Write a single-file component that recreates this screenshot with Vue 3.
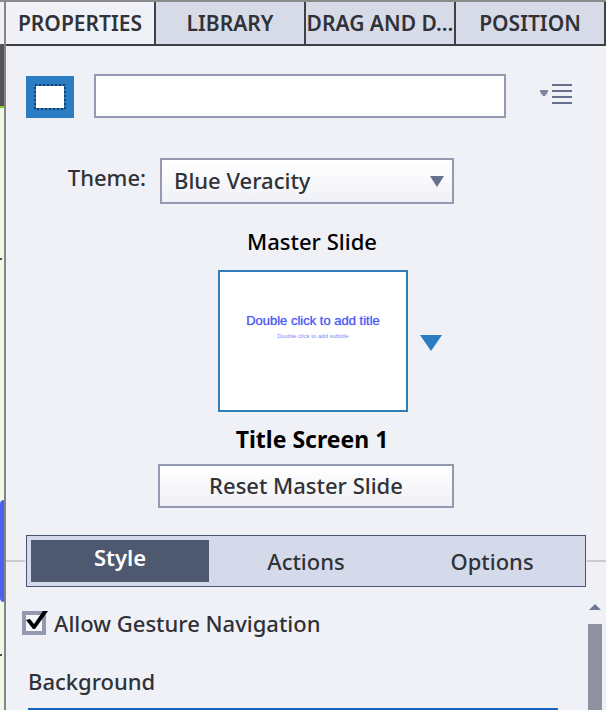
<template>
  <div class="workspace">
    <div class="canvas-edge">
      <div class="edge-top"></div>
      <div class="edge-ruler"></div>
      <div class="edge-slide">
        <i class="edge-dot dot-upper"></i>
        <i class="edge-shape"></i>
        <i class="edge-dot dot-lower"></i>
      </div>
    </div>

    <main class="panel">
      <nav class="panel-tabs">
        <button
          v-for="tab in panelTabs"
          :key="tab"
          type="button"
          :class="{ active: tab === activePanel }"
          @click="activePanel = tab"
        >
          {{ tab }}
        </button>
      </nav>

      <div class="name-row">
        <svg class="slide-icon" width="48" height="42" viewBox="0 0 48 42">
          <rect width="48" height="42" fill="#2a7dc2" />
          <rect x="9" y="9" width="30" height="24" fill="#fff" />
          <rect x="9" y="9" width="30" height="24" fill="none" stroke="#2a7dc2" stroke-width="2" />
          <rect
            x="9"
            y="9"
            width="30"
            height="24"
            fill="none"
            stroke="#103f6b"
            stroke-width="2"
            stroke-dasharray="2 2"
          />
        </svg>
        <input v-model="slideName" type="text" aria-label="Slide name" />
        <button class="menu-button" type="button" aria-label="Panel menu">
          <svg width="34" height="22" viewBox="0 0 34 22">
            <path d="M0 7h8v2L5 13H3L0 9z" fill="#7d86a0" />
            <path d="M12 2h20M12 8h20M12 14h20M12 20h20" stroke="#66708d" stroke-width="2" />
          </svg>
        </button>
      </div>

      <div class="theme-row">
        <label for="theme">Theme:</label>
        <div class="select-box">
          <select id="theme" v-model="theme">
            <option>Blue Veracity</option>
          </select>
          <svg class="select-arrow" width="14" height="12" viewBox="0 0 14 12">
            <path d="M0 1h14L7 12z" fill="#66708f" />
          </svg>
        </div>
      </div>

      <section class="master">
        <h2>Master Slide</h2>
        <div class="master-row">
          <div class="thumbnail">
            <p class="thumb-title">Double click to add title</p>
            <p class="thumb-subtitle">Double click to add subtitle</p>
          </div>
          <button class="master-arrow" type="button" aria-label="Choose master slide">
            <svg width="22" height="16" viewBox="0 0 22 16">
              <path d="M0 0h22L11 16z" fill="#2a7dc2" />
            </svg>
          </button>
        </div>
        <h3>Title Screen 1</h3>
      </section>
      <button class="reset-button" type="button">Reset Master Slide</button>

      <div class="section-row">
        <nav class="section-tabs">
          <button
            v-for="section in sections"
            :key="section"
            type="button"
            :class="{ active: section === activeSection }"
            @click="activeSection = section"
          >
            {{ section }}
          </button>
        </nav>
      </div>

      <div class="scroll-area">
        <div class="settings">
          <label class="check-row">
            <span class="check-box">
              <input v-model="allowGesture" type="checkbox" />
              <svg v-if="allowGesture" width="26" height="24" viewBox="0 0 26 24">
                <path d="M4 9l4-1 4 5L21 0h5L13 18h-2z" fill="#000" />
              </svg>
            </span>
            Allow Gesture Navigation
          </label>
          <h4>Background</h4>
          <div class="background-box"></div>
        </div>
        <div class="scrollbar">
          <svg width="12" height="6" viewBox="0 0 12 6">
            <path d="M6 0l6 6H0z" fill="#6d7896" />
          </svg>
          <div class="scroll-thumb"></div>
        </div>
      </div>
    </main>
  </div>
</template>

<script setup>
import { ref } from 'vue'

const panelTabs = ['PROPERTIES', 'LIBRARY', 'DRAG AND D...', 'POSITION']
const sections = ['Style', 'Actions', 'Options']

const activePanel = ref('PROPERTIES')
const activeSection = ref('Style')
const slideName = ref('')
const theme = ref('Blue Veracity')
const allowGesture = ref(true)
</script>

<style>
body {
  margin: 0;
}
</style>

<style scoped>
* {
  box-sizing: border-box;
}

.workspace {
  display: flex;
  height: 100vh;
  overflow: hidden;
  border-top: 2px solid #8b8b8b;
  background: #f0f1f7;
  color: #303238;
  font-family: 'Noto Sans', 'Open Sans', sans-serif;
  font-size: 22px;
  font-weight: 500;
  line-height: 30px;
}

button,
input,
select {
  margin: 0;
  padding: 0;
  border: 0;
  border-radius: 0;
  background: none;
  color: inherit;
  font: inherit;
}

h2,
h3,
h4,
p {
  margin: 0;
}

svg {
  display: block;
}

/* sliver of the stage */
.canvas-edge {
  display: flex;
  flex-direction: column;
  width: 6px;
  border-right: 2px solid #858585;
}

.edge-top {
  height: 42px;
}

.edge-ruler {
  height: 64px;
  border-bottom: 2px solid #7fcf2d;
  background: #545456;
}

.edge-slide {
  position: relative;
  flex: 1;
  background: #f0f8e9;
}

.edge-dot {
  position: absolute;
  left: 0;
  width: 2px;
  height: 2px;
  background: #4c4f4a;
}

.dot-upper {
  top: 150px;
}

.dot-lower {
  top: 546px;
}

.edge-shape {
  position: absolute;
  top: 392px;
  left: 0;
  width: 4px;
  height: 102px;
  border-radius: 4px 0 0 4px;
  background: #4a63ee;
}

.panel {
  display: flex;
  flex: 1;
  flex-direction: column;
  min-width: 0;
}

.panel-tabs {
  display: grid;
  grid-template-columns: repeat(4, minmax(0, 1fr));
  height: 44px;
  border-bottom: 2px solid #3b3d47;
}

.panel-tabs button {
  border-right: 2px solid #3f4149;
  background: #d7dbe8;
  font-size: 21px;
  font-weight: 600;
  white-space: nowrap;
}

.panel-tabs .active {
  background: #f0f1f7;
}

.name-row {
  display: flex;
  align-items: flex-end;
  margin: 28px 32px 0 20px;
}

.name-row input {
  flex: 1;
  min-width: 0;
  height: 44px;
  margin: 0 34px 0 20px;
  padding: 0 12px;
  border: 2px solid #9499b0;
  background: #fff;
}

.menu-button {
  align-self: center;
  padding-bottom: 4px;
}

.theme-row {
  display: grid;
  grid-template-columns: 1fr 294px 1fr;
  margin-top: 40px;
  padding-left: 2px;
}

.theme-row label {
  justify-self: end;
  margin: 4px 14px 0 0;
}

.select-box {
  display: grid;
  align-items: center;
}

.select-box select {
  grid-area: 1 / 1;
  width: 100%;
  height: 46px;
  padding: 0 40px 2px 12px;
  border: 2px solid #9499b0;
  background: linear-gradient(#fff, #f0f1f7);
  appearance: none;
}

.select-arrow {
  grid-area: 1 / 1;
  justify-self: end;
  margin-right: 10px;
  pointer-events: none;
}

.master {
  margin-top: 22px;
  color: #000;
  text-align: center;
}

.master h2,
.master h3 {
  padding-left: 12px;
}

.master h2 {
  font-size: 22px;
  font-weight: 500;
}

.master h3 {
  margin-top: 12px;
  font-size: 23px;
  font-weight: 700;
}

.master-row {
  display: grid;
  grid-template-columns: 1fr 190px 1fr;
  column-gap: 12px;
  align-items: center;
  margin-top: 14px;
  padding-left: 14px;
}

.thumbnail {
  grid-column: 2;
  height: 142px;
  padding-top: 40px;
  border: 2px solid #2f7db9;
  background: #fff;
  color: #4c58f5;
  font-family: 'Liberation Sans', Arial, sans-serif;
  font-weight: 400;
  white-space: nowrap;
}

.thumb-title {
  font-size: 13px;
  line-height: 18px;
  text-shadow: 0 0 1px #7f88fa;
}

.thumb-subtitle {
  color: #8088fa;
  font-size: 6px;
  line-height: 12px;
}

.master-arrow {
  justify-self: start;
  padding-top: 4px;
}

.reset-button {
  align-self: center;
  width: 296px;
  height: 44px;
  margin-top: 10px;
  padding-bottom: 2px;
  border: 2px solid #9499b0;
  background: linear-gradient(#fff, #f0f1f7);
}

/* the rule runs out to both sides of the switch */
.section-row {
  display: flex;
  align-items: center;
  margin-top: 27px;
}

.section-row::before,
.section-row::after {
  width: 19px;
  height: 2px;
  background: #cbccd1;
  content: '';
}

.section-tabs {
  display: grid;
  flex: 1;
  grid-template-columns: repeat(3, 1fr);
  height: 52px;
  margin: 0 1px;
  border: 1px solid #4a5573;
  background: #d5daea;
}

.section-tabs .active {
  margin: 4px;
  padding-bottom: 8px;
  background: #4e586f;
  color: #fff;
  font-weight: 600;
}

.scroll-area {
  display: flex;
  flex: 1;
  justify-content: space-between;
  min-height: 0;
}

.settings {
  display: flex;
  flex: 1;
  flex-direction: column;
  padding: 21px 30px 0 16px;
}

.check-row {
  display: flex;
  align-items: center;
  gap: 6px;
}

.check-box {
  display: grid;
}

.check-box input {
  grid-area: 1 / 1;
  width: 24px;
  height: 24px;
  border: 4px solid #9499b0;
  background: #f6f7fb;
  appearance: none;
}

.check-box svg {
  grid-area: 1 / 1;
  pointer-events: none;
}

.settings h4 {
  margin: 28px 0 0 6px;
  font-size: 22px;
  font-weight: 500;
}

.background-box {
  flex: 1;
  min-height: 2px;
  margin: 12px 0 0 6px;
  border-top: 2px solid #1a63c4;
}

.scrollbar {
  display: flex;
  flex-direction: column;
  align-items: center;
  width: 14px;
  margin-right: 4px;
  padding-top: 17px;
}

.scroll-thumb {
  flex: 1;
  width: 14px;
  margin-top: 14px;
  background: #8e919e;
}
</style>
